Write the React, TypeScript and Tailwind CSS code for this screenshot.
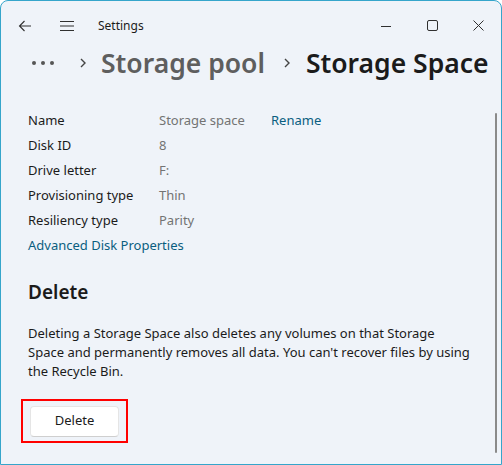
import React from "react";

const font = { fontFamily: '"Segoe UI", "Noto Sans", "Open Sans", sans-serif' };

function Row({ label, value, link }: { label: string; value: string; link?: string }) {
  return (
    <div className="flex h-[25px] items-center text-[13px] whitespace-nowrap">
      <div className="w-[131px] text-[#1b1b1b]">{label}</div>
      <div className="w-[112px] text-[#737373]">{value}</div>
      {link && <div className="text-[#0a5e80]">{link}</div>}
    </div>
  );
}

export default function App() {
  return (
    <div className="w-[502px] h-[465px] bg-white" style={font}>
      <div className="relative w-[502px] h-[465px] bg-[#eff3f9] border border-[#35a5cb] rounded-t-[8px] overflow-hidden">
        {/* title bar */}
        <div className="flex h-[49px] items-center">
          <div className="w-[46px] flex justify-center pl-[2px]">
            <svg width="16" height="16" viewBox="0 0 16 16" fill="none" stroke="#303030" strokeWidth="1.1">
              <path d="M14 8H2.5M7.5 3 2.5 8l5 5" />
            </svg>
          </div>
          <div className="w-[40px] flex justify-center">
            <svg width="16" height="14" viewBox="0 0 16 14" fill="none" stroke="#303030" strokeWidth="1.1">
              <path d="M1 2.5h14M1 7h14M1 11.5h14" />
            </svg>
          </div>
          <div className="ml-[11px] text-[12px] text-[#1b1b1b]">Settings</div>
          <div className="ml-auto flex h-full">
            <div className="w-[46px] flex items-center justify-center">
              <svg width="10" height="10" viewBox="0 0 10 10" stroke="#303030" strokeWidth="1">
                <path d="M0 5.5h10" />
              </svg>
            </div>
            <div className="w-[46px] flex items-center justify-center">
              <svg width="11" height="11" viewBox="0 0 11 11" fill="none" stroke="#303030" strokeWidth="1">
                <rect x="0.5" y="0.5" width="10" height="10" rx="1.5" />
              </svg>
            </div>
            <div className="w-[46px] flex items-center justify-center">
              <svg width="11" height="11" viewBox="0 0 11 11" stroke="#303030" strokeWidth="1">
                <path d="M0.5 0.5l10 10M10.5 0.5l-10 10" />
              </svg>
            </div>
          </div>
        </div>

        {/* breadcrumb */}
        <div className="flex h-[28px] items-center pl-[31px] whitespace-nowrap -mt-[1px]">
          <div className="flex gap-[5px] items-center w-[24px]">
            <span className="w-[4px] h-[4px] rounded-full bg-[#555]" />
            <span className="w-[4px] h-[4px] rounded-full bg-[#555]" />
            <span className="w-[4px] h-[4px] rounded-full bg-[#555]" />
          </div>
          <svg className="ml-[22px]" width="10" height="12" viewBox="0 0 10 12" fill="none" stroke="#444" strokeWidth="1.4">
            <path d="M3 2l4 4-4 4" />
          </svg>
          <div className="ml-[13px] text-[26.5px] font-semibold text-[#5e5e5e] leading-none">Storage pool</div>
          <svg className="ml-[17px]" width="10" height="12" viewBox="0 0 10 12" fill="none" stroke="#444" strokeWidth="1.4">
            <path d="M3 2l4 4-4 4" />
          </svg>
          <div className="ml-[14px] text-[26.5px] font-semibold text-[#1b1b1b] leading-none">Storage Space</div>
        </div>

        {/* properties */}
        <div className="pl-[27px] pt-[31px]">
          <Row label="Name" value="Storage space" link="Rename" />
          <Row label="Disk ID" value="8" />
          <Row label="Drive letter" value="F:" />
          <Row label="Provisioning type" value="Thin" />
          <Row label="Resiliency type" value="Parity" />
          <div className="h-[25px] flex items-center text-[13px] text-[#0a5e80]">Advanced Disk Properties</div>

          <div className="mt-[20px] text-[19px] font-semibold text-[#1b1b1b] leading-[28px]">Delete</div>
          <p className="mt-[18px] w-[470px] text-[13px] leading-[19px] text-[#1b1b1b] whitespace-nowrap">
            Deleting a Storage Space also deletes any volumes on that Storage
            <br />
            Space and permanently removes all data. You can't recover files by using
            <br />
            the Recycle Bin.
          </p>
          <div className="mt-[18px] -ml-[7px] w-[107px] h-[44px] border-2 border-[#ff0000] flex items-center justify-center">
            <div className="w-[89px] h-[31px] bg-white rounded-[4px] border border-[#e5e5e5] border-b-[#cfcfcf] flex items-center justify-center text-[13px] text-[#1b1b1b]">
              Delete
            </div>
          </div>
        </div>

        {/* scrollbar */}
        <div className="absolute right-[4px] top-[112px] w-[2px] h-[340px] rounded-full bg-[#8a8a8a]" />
      </div>
    </div>
  );
}
